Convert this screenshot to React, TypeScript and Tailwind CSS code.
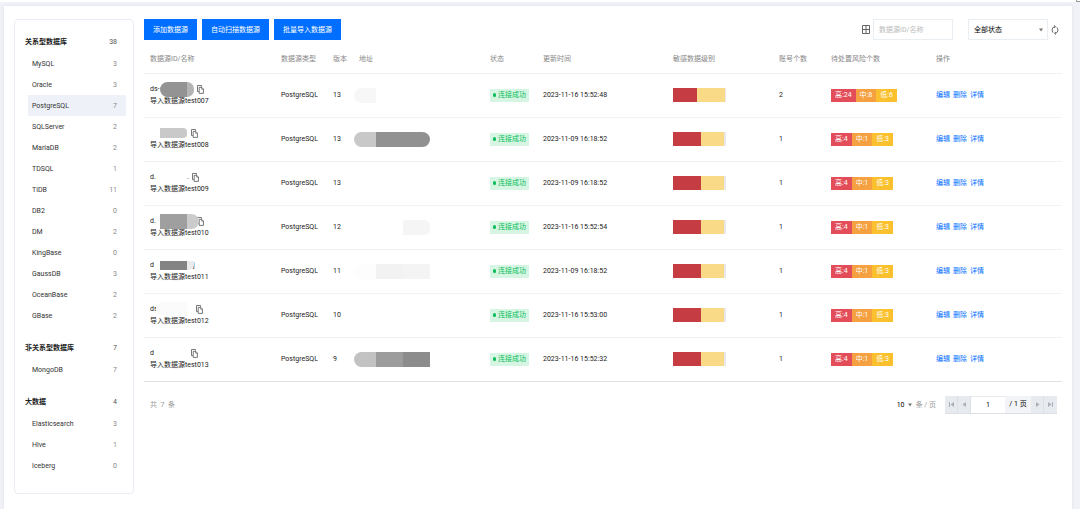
import React from "react";

type Item = { name: string; count: number };
type Group = { title: string; count: number; items: Item[] };

const groups: Group[] = [
  {
    title: "关系型数据库",
    count: 38,
    items: [
      { name: "MySQL", count: 3 },
      { name: "Oracle", count: 3 },
      { name: "PostgreSQL", count: 7 },
      { name: "SQLServer", count: 2 },
      { name: "MariaDB", count: 2 },
      { name: "TDSQL", count: 1 },
      { name: "TiDB", count: 11 },
      { name: "DB2", count: 0 },
      { name: "DM", count: 2 },
      { name: "KingBase", count: 0 },
      { name: "GaussDB", count: 3 },
      { name: "OceanBase", count: 2 },
      { name: "GBase", count: 2 },
    ],
  },
  { title: "非关系型数据库", count: 7, items: [{ name: "MongoDB", count: 7 }] },
  {
    title: "大数据",
    count: 4,
    items: [
      { name: "Elasticsearch", count: 3 },
      { name: "Hive", count: 1 },
      { name: "Iceberg", count: 0 },
    ],
  },
];

type Row = {
  prefix: string;
  maskWidth: string;
  mask: string[];
  tail?: string;
  copy: boolean;
  name: string;
  version: string;
  address: string[];
  time: string;
  accounts: number;
  risks: [number, number, number];
  level: [string, string];
};

const rows: Row[] = [
  {
    prefix: "ds-",
    maskWidth: "w-[34px]",
    mask: ["h-[15px] w-[27px] rounded-l-full bg-[#939393]", "h-[15px] w-[7px] rounded-r-full bg-[#b4b4b4]"],
    copy: true,
    name: "导入数据源test007",
    version: "13",
    address: ["w-[22px] rounded-l-full bg-[#f7f7f7]"],
    time: "2023-11-16 15:52:48",
    accounts: 2,
    risks: [24, 8, 6],
    level: ["w-[24px]", "w-[28px]"],
  },
  {
    prefix: "",
    maskWidth: "w-[28px]",
    mask: ["h-[10px] w-[27px] rounded-r-sm bg-[#c9c9c9]"],
    copy: true,
    name: "导入数据源test008",
    version: "13",
    address: ["w-[22px] rounded-l-full bg-[#c8c8c8]", "w-[54px] rounded-r-full bg-[#919191]"],
    time: "2023-11-09 16:18:52",
    accounts: 1,
    risks: [4, 1, 3],
    level: ["w-[28px]", "w-[23px]"],
  },
  {
    prefix: "d.",
    maskWidth: "w-[27px]",
    mask: [],
    tail: ".",
    copy: true,
    name: "导入数据源test009",
    version: "13",
    address: [],
    time: "2023-11-09 16:18:52",
    accounts: 1,
    risks: [4, 1, 3],
    level: ["w-[28px]", "w-[23px]"],
  },
  {
    prefix: "d.",
    maskWidth: "w-[34px]",
    mask: ["h-[15px] w-[27px] bg-[#9f9f9f]", "h-[15px] w-[12px] rounded-r-full bg-[#cbcbcb]"],
    copy: true,
    name: "导入数据源test010",
    version: "12",
    address: ["w-[49px]", "w-[27px] rounded-r-md bg-[#f5f5f5]"],
    time: "2023-11-16 15:52:54",
    accounts: 1,
    risks: [4, 1, 3],
    level: ["w-[28px]", "w-[23px]"],
  },
  {
    prefix: "d",
    maskWidth: "w-[33px]",
    mask: ["h-[9px] w-[27px] bg-[#848484]", "h-[9px] w-[7px] rounded-br-md bg-[#ebebeb]"],
    tail: "j",
    copy: false,
    name: "导入数据源test011",
    version: "11",
    address: ["w-[22px] rounded-l-full bg-[#fdfdfd]", "w-[27px] bg-[#f2f2f2]", "w-[27px] bg-[#f4f4f4]"],
    time: "2023-11-09 16:18:52",
    accounts: 1,
    risks: [4, 1, 3],
    level: ["w-[28px]", "w-[23px]"],
  },
  {
    prefix: "ds",
    maskWidth: "w-[33px]",
    mask: ["-ml-1 h-[14px] w-[31px] rounded-l-md bg-[#fbfbfb]"],
    copy: true,
    name: "导入数据源test012",
    version: "10",
    address: [],
    time: "2023-11-16 15:53:00",
    accounts: 1,
    risks: [4, 1, 3],
    level: ["w-[28px]", "w-[23px]"],
  },
  {
    prefix: "d",
    maskWidth: "w-[28px]",
    mask: [],
    copy: true,
    name: "导入数据源test013",
    version: "9",
    address: ["w-[22px] rounded-l-full bg-[#c2c2c2]", "w-[27px] bg-[#9c9c9c]", "w-[27px] bg-[#8c8c8c]"],
    time: "2023-11-16 15:52:32",
    accounts: 1,
    risks: [4, 1, 3],
    level: ["w-[28px]", "w-[23px]"],
  },
];

const columns = [
  { label: "数据源ID/名称", width: "w-[131px]" },
  { label: "数据源类型", width: "w-[52px]" },
  { label: "版本", width: "w-[26px]" },
  { label: "地址", width: "w-[131px]" },
  { label: "状态", width: "w-[53px]" },
  { label: "更新时间", width: "w-[130px]" },
  { label: "敏感数据级别", width: "w-[106px]" },
  { label: "账号个数", width: "w-[52px]" },
  { label: "待处置风险个数", width: "w-[105px]" },
  { label: "操作", width: "w-[132px]" },
];

function CopyIcon() {
  return (
    <svg className="h-[9px] w-[7px]" viewBox="0 0 7 9" fill="none" stroke="#555" strokeWidth="0.8">
      <path d="M1.9 6.6H.5V.5h4v1.3" />
      <path d="M2.2 2.4h2.6L6.4 4v4.4H2.2z" />
      <path d="M4.6 2.5v1.7h1.7" strokeWidth="0.6" />
    </svg>
  );
}

function Caret() {
  return (
    <svg className="pointer-events-none h-1 w-1" viewBox="0 0 5 5" fill="#777">
      <path d="M0 .5h5L2.5 4.5z" />
    </svg>
  );
}

function Sidebar() {
  return (
    <nav className="flex w-[120px] shrink-0 flex-col gap-[11px] self-start rounded-sm border border-[#e8edf5] pt-[11px] pr-[7px] pb-[17px] pl-[10px]">
      {groups.map((group) => (
        <section key={group.title}>
          <h2 className="flex h-[22px] items-center justify-between pr-[9px] font-bold text-[#222]">
            {group.title}
            <span className="font-normal text-[#555]">{group.count}</span>
          </h2>
          <ul className="pl-[3px]">
            {group.items.map((item) => (
              <li key={item.name}>
                <a
                  href="#"
                  className={`flex h-[21px] items-center justify-between pr-[9px] pl-1 text-[#333] ${
                    item.name === "PostgreSQL" ? "bg-[#eef2f8]" : ""
                  }`}
                >
                  {item.name}
                  <span className="text-[#888]">{item.count}</span>
                </a>
              </li>
            ))}
          </ul>
        </section>
      ))}
    </nav>
  );
}

function Toolbar() {
  return (
    <div className="flex h-[21px] items-stretch justify-between pr-[3px]">
      <div className="flex gap-[5px]">
        {["添加数据源", "自动扫描数据源", "批量导入数据源"].map((label) => (
          <button key={label} type="button" className="bg-[#006eff] px-[9px] text-white">
            {label}
          </button>
        ))}
      </div>
      <div className="flex items-center">
        <button type="button" aria-label="列设置" className="mr-[3px]">
          <svg className="h-[9px] w-2" viewBox="0 0 8 9" fill="none" stroke="#555" strokeWidth="0.9">
            <path d="M.5.5h7v8h-7zM4 .5v8M.5 4.5h7" />
          </svg>
        </button>
        <input
          aria-label="搜索数据源"
          placeholder="数据源ID/名称"
          className="h-[21px] w-20 border border-[#e9eef3] px-[5px] outline-none placeholder:text-[#bbb]"
        />
        <div className="relative ml-[15px] flex items-center">
          <select
            aria-label="状态"
            className="h-[21px] w-20 appearance-none border border-[#e9eef3] bg-white px-[5px] text-black outline-none"
          >
            <option>全部状态</option>
          </select>
          <span className="pointer-events-none absolute right-[5px] flex">
            <Caret />
          </span>
        </div>
        <button type="button" aria-label="刷新" className="ml-[3px]">
          <svg className="h-[10px] w-2" viewBox="0 0 8 10" fill="none" stroke="#555" strokeWidth="0.9">
            <path d="M2.2 7.7A3 3.4 0 0 1 3.6 1.7M5.8 2.3A3 3.4 0 0 1 4.4 8.3" />
            <path d="M3 .4l1.5 1.3L3 3M5 7L3.5 8.3 5 9.6" />
          </svg>
        </button>
      </div>
    </div>
  );
}

function DataTable() {
  return (
    <table className="w-full table-fixed border-collapse text-left">
      <thead>
        <tr className="h-[33px] border-b border-[#f0f0f0]">
          {columns.map((column) => (
            <th key={column.label} className={`${column.width} pt-[6px] pl-[6px] font-normal whitespace-nowrap text-[#888]`}>
              {column.label}
            </th>
          ))}
        </tr>
      </thead>
      <tbody>
        {rows.map((row) => (
          <tr key={row.name} className="h-[44px] border-b border-[#f2f2f2] last:border-[#dfe1e6]">
            <td className="pl-[6px]">
              <div className="flex h-3 items-center">
                <span className="w-[10px] shrink-0">{row.prefix}</span>
                <span className={`relative flex shrink-0 items-center ${row.maskWidth}`}>
                  {row.mask.map((segment) => (
                    <span key={segment} className={`shrink-0 ${segment}`} />
                  ))}
                </span>
                {row.tail && <span>{row.tail}</span>}
                {row.copy && (
                  <button type="button" aria-label="复制" className="ml-[3px]">
                    <CopyIcon />
                  </button>
                )}
              </div>
              <div className="relative h-3 whitespace-nowrap">{row.name}</div>
            </td>
            <td className="pl-[6px]">PostgreSQL</td>
            <td className="pl-[6px]">{row.version}</td>
            <td className="pl-px">
              <div className="flex">
                {row.address.map((segment) => (
                  <span key={segment} className={`h-[15px] ${segment}`} />
                ))}
              </div>
            </td>
            <td className="pl-[6px]">
              <span className="flex h-[13px] w-[39px] items-center justify-center gap-[2px] bg-[#d6f5e3] whitespace-nowrap text-[#0abf5b]">
                <span className="h-1 w-[3px] rounded-full bg-[#0abf5b]" />
                连接成功
              </span>
            </td>
            <td className="pl-[6px] whitespace-nowrap">{row.time}</td>
            <td className="pl-[6px]">
              <div className="flex h-[14px] w-[53px] bg-[#e8e8ea]">
                <span className={`bg-[#c53c42] ${row.level[0]}`} />
                <span className={`bg-[#f9da86] ${row.level[1]}`} />
              </div>
            </td>
            <td className="pl-[6px]">{row.accounts}</td>
            <td className="pl-[6px]">
              <div className="flex h-[13px] leading-[13px] whitespace-nowrap text-white">
                <span className="bg-[#e34d59] px-1">高:{row.risks[0]}</span>
                <span className="bg-[#f5a142] px-1">中:{row.risks[1]}</span>
                <span className="bg-[#fbc02d] px-1">低:{row.risks[2]}</span>
              </div>
            </td>
            <td className="pl-[6px]">
              <div className="flex gap-[3px] whitespace-nowrap text-[#006eff]">
                <a href="#">编辑</a>
                <a href="#">删除</a>
                <a href="#">详情</a>
              </div>
            </td>
          </tr>
        ))}
      </tbody>
    </table>
  );
}

function PageButton({ label, d }: { label: string; d: string }) {
  return (
    <button type="button" aria-label={label} className="flex w-[13px] items-center justify-center border-r border-[#dcdfe5] bg-[#e7eaef] last:border-r-0">
      <svg className="h-[5px] w-[5px]" viewBox="0 0 5 5" fill="#aab0ba">
        <path d={d} />
      </svg>
    </button>
  );
}

function Footer() {
  return (
    <div className="flex items-center justify-between pt-[14px] pr-[5px] pl-[6px]">
      <span className="text-[#999]">共&nbsp; 7&nbsp; 条</span>
      <div className="flex items-center">
        <div className="relative flex items-center">
          <select aria-label="每页条数" className="w-[15px] appearance-none bg-transparent text-black outline-none">
            <option>10</option>
          </select>
          <span className="pointer-events-none absolute right-0 flex">
            <Caret />
          </span>
        </div>
        <span className="ml-1 text-[#999]">条 / 页</span>
        <div className="ml-[9px] flex h-[18px] border-b border-[#dcdfe5]">
          <PageButton label="首页" d="M0 0h1v5H0zM5 0v5L1.5 2.5z" />
          <PageButton label="上一页" d="M4 0v5L.5 2.5z" />
          <input aria-label="页码" defaultValue="1" className="w-[34px] border-t border-[#e7eaef] bg-white text-center text-black outline-none" />
          <span className="flex w-[26px] items-center justify-center bg-[#f2f4f7] text-black">/ 1 页</span>
          <PageButton label="下一页" d="M1 0v5l3.5-2.5z" />
          <PageButton label="末页" d="M4 0h1v5H4zM0 0v5l3.5-2.5z" />
        </div>
      </div>
    </div>
  );
}

export default function App() {
  return (
    <div className="relative bg-white pt-[2px] font-['Roboto','Noto_Sans_CJK_SC',sans-serif] text-[7px] leading-3 text-[#222]">
      <span className="absolute top-0 right-0 h-[2px] w-1 border-b border-l border-[#999]" />
      <div className="bg-[#f1f2f7] pt-1 pr-2 pl-1">
        <div className="flex gap-[10px] bg-white pt-[13px] pr-[10px] pb-[15px] pl-[10px] shadow-[0_0_3px_#dcdee6]">
          <Sidebar />
          <main className="min-w-0 flex-1">
            <Toolbar />
            <DataTable />
            <Footer />
          </main>
        </div>
      </div>
    </div>
  );
}
